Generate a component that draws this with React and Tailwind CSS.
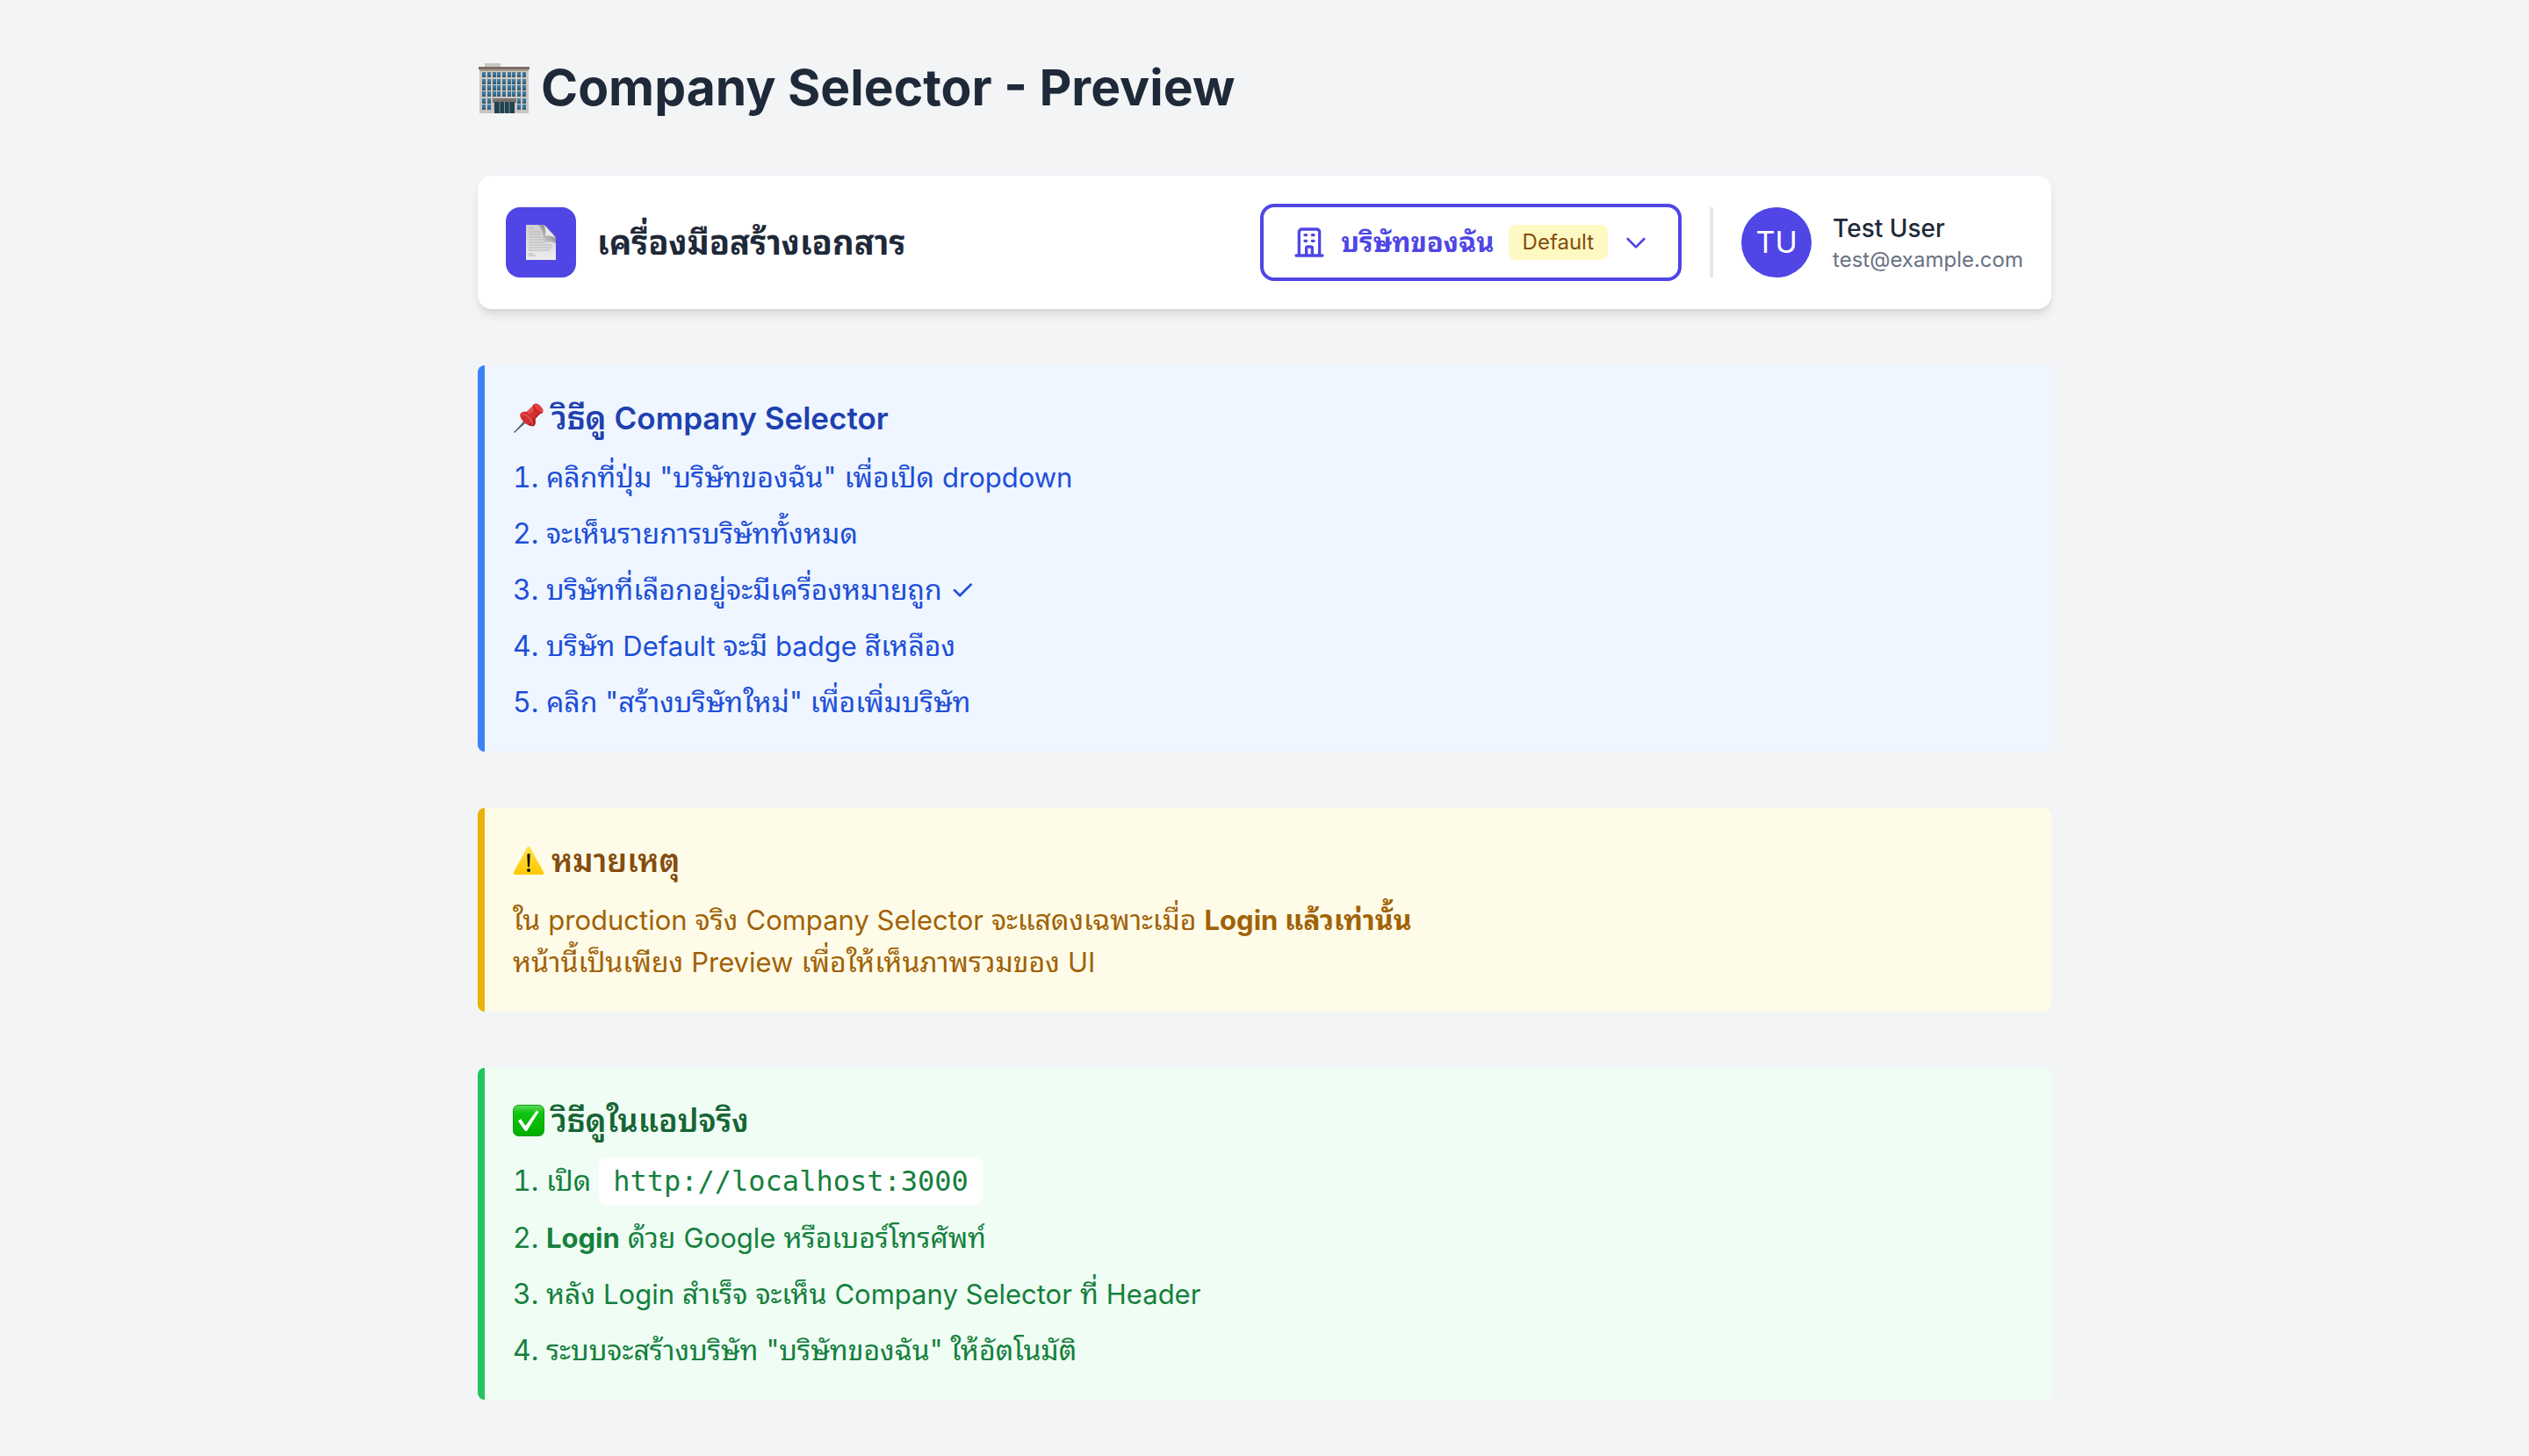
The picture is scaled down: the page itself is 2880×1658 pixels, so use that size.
const Building = () => (
  <svg viewBox="0 0 60 60" className="size-15 shrink-0" aria-hidden="true">
    <defs>
      <linearGradient id="wall" x1="0" y1="0" x2="0" y2="1">
        <stop offset="0" stopColor="#d3cabd" />
        <stop offset="1" stopColor="#c6c4c3" />
      </linearGradient>
      <linearGradient id="pane" x1="0" y1="0" x2="0" y2="1">
        <stop offset="0" stopColor="#4686b0" />
        <stop offset="1" stopColor="#2f5874" />
      </linearGradient>
    </defs>
    <rect x="8" y="2" width="18" height="6" fill="#c9c7c3" />
    <rect x="2" y="8" width="56" height="51" fill="url(#wall)" />
    <rect x="1" y="6" width="58" height="3" fill="#7d6e66" />
    <rect x="2" y="9" width="56" height="2" fill="#a79a8d" />
    {[12, 20, 27, 34, 42, 49].map((y, row) =>
      [5, 11, 17, 22, 28, 34, 39, 45, 51].map((x, col) =>
        row > 3 && col > 1 && col < 7 ? null : (
          <rect key={`${x}-${y}`} x={x} y={y} width="4" height="6" fill="url(#pane)" />
        ),
      ),
    )}
    <rect x="17" y="42" width="27" height="5" fill="#7a7370" />
    <rect x="19" y="46" width="23" height="13" fill="#21414e" />
    <path d="M25 46v13M30.500 46v13M36 46v13" stroke="#7f979f" strokeWidth="1" />
  </svg>
);

const Page = () => (
  <svg viewBox="0 0 34 40" className="h-10 w-9" aria-hidden="true">
    <defs>
      <linearGradient id="sheet" x1="0" y1="0" x2="0" y2="1">
        <stop offset="0" stopColor="#cfcfcf" />
        <stop offset="1" stopColor="#ededed" />
      </linearGradient>
      <linearGradient id="shade" x1="1" y1="0" x2="0" y2="1">
        <stop offset="0" stopColor="#555" />
        <stop offset="1" stopColor="#999" stopOpacity="0" />
      </linearGradient>
      <linearGradient id="fold" x1="1" y1="0" x2="0" y2="1">
        <stop offset="0" stopColor="#fff" />
        <stop offset="1" stopColor="#dcdcdc" />
      </linearGradient>
    </defs>
    <path d="M0 0h19q2 0 4 2l9 10q2 2 2 4v24H0z" fill="url(#sheet)" />
    <path d="M3 4h6M3 8h14M3 11h15M3 14h15M3 17h16M3 20h16M3 23h26M3 26h27M3 29h24M3 33h5M3 35h8" stroke="#b4b4b4" strokeWidth="1" />
    <path d="M14 0h6l14 15v6c-4-2-9-3-16 1 3-8 1-16-4-22z" fill="url(#shade)" />
    <path d="M20 0l14 15c-4-2-8-3-12-2 1-5 0-10-2-13z" fill="url(#fold)" />
  </svg>
);

const Pin = () => (
  <svg viewBox="0 0 36 36" className="size-9 shrink-0" aria-hidden="true">
    <path d="M1.500 34.500l12-15 3 3z" fill="#8b9aa8" />
    <path d="M1.500 34.500L15 21.500" stroke="#47525e" strokeWidth="1.200" />
    <path d="M8.500 13c3-3 6-2 8.500-2.500L23 4l8.500 8.500-6 6.500c0 3 1 6-1.500 8-3 1-8-1-11-4S7.500 16 8.500 13z" fill="#d32f30" />
    <path d="M16 10.500L23 4l3 3-7 7z" fill="#e5504c" />
    <path d="M23 20l7-8 1.500.500-6 6.500c0 3 1 6-1.500 8-2 .500-5-.500-7-2 4 0 6-1 6-5z" fill="#ad1c22" />
    <path d="M9.500 14c2-1 6 0 9 3.500s4.500 6 4 8.500" stroke="#ee5f58" strokeWidth="1.300" fill="none" />
    <ellipse cx="28.500" cy="7.500" rx="4" ry="7" transform="rotate(-45 28.500 7.500)" fill="#c92529" />
    <ellipse cx="29.500" cy="6.500" rx="3" ry="6.500" transform="rotate(-45 29.500 6.500)" fill="#e5423f" />
  </svg>
);

const Warning = () => (
  <svg viewBox="0 0 36 36" className="size-9 shrink-0" aria-hidden="true">
    <defs>
      <linearGradient id="sign" x1="0" y1="0" x2="0" y2="1">
        <stop offset="0" stopColor="#ffe04a" />
        <stop offset="1" stopColor="#ffc800" />
      </linearGradient>
    </defs>
    <path d="M16.200 3.200q1.800-2.800 3.600 0L35 31q1.300 3-1.600 3H2.600Q-.3 34 1 31z" fill="url(#sign)" />
    <path d="M16.300 11q1.700-2 3.400 0l-.7 14h-2z" fill="#111" />
    <circle cx="18" cy="29" r="2" fill="#111" />
  </svg>
);

const Check = () => (
  <svg viewBox="0 0 36 36" className="size-9 shrink-0" aria-hidden="true">
    <defs>
      <linearGradient id="tick" x1="0" y1="0" x2="0" y2="1">
        <stop offset="0" stopColor="#5fdc5f" />
        <stop offset=".25" stopColor="#0fc60f" />
        <stop offset="1" stopColor="#00ad00" />
      </linearGradient>
    </defs>
    <rect x=".5" y=".5" width="35" height="35" rx="6" fill="url(#tick)" stroke="#129a1c" />
    <path d="M6 18.500l3-2.500 5.500 8L27 6.500l2.500 1.500L16 30h-2z" fill="#fff" />
  </svg>
);

const Office = () => (
  <svg viewBox="0 0 24 24" className="size-10" fill="none" stroke="currentColor" strokeWidth="2" strokeLinecap="round" strokeLinejoin="round" aria-hidden="true">
    <path d="M19 21V5a2 2 0 00-2-2H7a2 2 0 00-2 2v16m14 0h2m-2 0h-5m-9 0H3m2 0h5M9 7h1m-1 4h1m4-4h1m-1 4h1m-5 10v-5a1 1 0 011-1h2a1 1 0 011 1v5m-4 0h4" />
  </svg>
);

const Chevron = () => (
  <svg viewBox="0 0 24 24" className="size-8" fill="none" stroke="currentColor" strokeWidth="2" strokeLinecap="round" strokeLinejoin="round" aria-hidden="true">
    <path d="M19 9l-7 7-7-7" />
  </svg>
);

/* Latin words inside Thai text run slightly smaller so both scripts look even. */
const En = ({ children }) => (
  <span lang="en" className="text-[31px]">
    {children}
  </span>
);

const Panel = ({ icon, title, box, head, children }) => (
  <section className={`rounded-lg border-l-8 p-8 ${box}`}>
    <h2 className={`mb-4 flex items-center gap-2 text-4xl leading-14 font-semibold ${head}`}>
      {icon}
      <span>{title}</span>
    </h2>
    {children}
  </section>
);

export default function App() {
  return (
    <div
      lang="th"
      className="min-h-screen bg-gray-100 p-16 font-['Inter','Thonburi','Noto_Sans_Thai_Looped','Loma','Waree','Garuda','Noto_Sans_Thai',sans-serif] text-[32px] leading-12"
    >
      <main className="mx-auto flex max-w-448 flex-col gap-16">
        <h1 className="flex items-center gap-3 text-[57px] leading-18 font-bold text-gray-800">
          <Building />
          Company Selector - Preview
        </h1>

        <header className="flex items-center justify-between rounded-2xl bg-white p-8 shadow-[0_8px_12px_-2px_rgb(0_0_0/0.1),0_4px_8px_-4px_rgb(0_0_0/0.1)]">
          <div className="flex items-center gap-6">
            <div className="flex size-20 items-center justify-center rounded-2xl bg-[#4f46e5]">
              <Page />
            </div>
            <span className="text-[38px] leading-14 font-bold text-gray-800">เครื่องมือสร้างเอกสาร</span>
          </div>
          <div className="flex items-center gap-8">
            <button type="button" className="flex h-22 items-center gap-4 rounded-2xl border-4 border-[#4f46e5] px-8 text-[#4f46e5]">
              <Office />
              <span className="text-[31px] font-bold">บริษัทของฉัน</span>
              <span className="rounded-lg bg-[#fef9c3] px-4 py-1 text-2xl leading-8 text-[#854d0e]">Default</span>
              <Chevron />
            </button>
            <div className="flex items-center gap-6 border-l-4 border-gray-200 pl-8">
              <div className="flex size-20 items-center justify-center rounded-full bg-[#4f46e5] text-[34px] text-white">TU</div>
              <div>
                <div className="text-[28px] leading-10 font-medium text-gray-800">Test User</div>
                <div className="text-2xl leading-8 text-gray-500">test@example.com</div>
              </div>
            </div>
          </div>
        </header>

        <Panel
          icon={<Pin />}
          title={
            <>
              วิธีดู{" "}
              <span lang="en" className="text-[35px]">
                Company Selector
              </span>
            </>
          }
          box="border-[#3b82f6] bg-[#eff6ff]"
          head="text-[#1e40af]"
        >
          <ol className="flex list-inside list-decimal flex-col gap-4 text-[#1d4ed8]">
            <li>
              คลิกที่ปุ่ม "บริษัทของฉัน" เพื่อเปิด <En>dropdown</En>
            </li>
            <li>จะเห็นรายการบริษัททั้งหมด</li>
            <li>บริษัทที่เลือกอยู่จะมีเครื่องหมายถูก ✓</li>
            <li>
              บริษัท <En>Default</En> จะมี <En>badge</En> สีเหลือง
            </li>
            <li>คลิก "สร้างบริษัทใหม่" เพื่อเพิ่มบริษัท</li>
          </ol>
        </Panel>

        <Panel icon={<Warning />} title="หมายเหตุ" box="border-[#eab308] bg-[#fefce8]" head="text-[#854d0e]">
          <p className="text-[#a16207]">
            ใน <En>production</En> จริง <En>Company Selector</En> จะแสดงเฉพาะเมื่อ{" "}
            <strong>
              <En>Login</En> แล้วเท่านั้น
            </strong>
            <br />
            หน้านี้เป็นเพียง <En>Preview</En> เพื่อให้เห็นภาพรวมของ <En>UI</En>
          </p>
        </Panel>

        <Panel icon={<Check />} title="วิธีดูในแอปจริง" box="border-[#22c55e] bg-[#f0fdf4]" head="text-[#166534]">
          <ol className="flex list-inside list-decimal flex-col gap-4 text-[#15803d]">
            <li>
              เปิด <code className="rounded-lg bg-white px-4 py-2 font-['DejaVu_Sans_Mono',monospace] text-[32px] leading-[50px]">http://localhost:3000</code>
            </li>
            <li>
              <strong>
                <En>Login</En>
              </strong>{" "}
              ด้วย <En>Google</En> หรือเบอร์โทรศัพท์
            </li>
            <li>
              หลัง <En>Login</En> สำเร็จ จะเห็น <En>Company Selector</En> ที่ <En>Header</En>
            </li>
            <li>ระบบจะสร้างบริษัท "บริษัทของฉัน" ให้อัตโนมัติ</li>
          </ol>
        </Panel>
      </main>
    </div>
  );
}
